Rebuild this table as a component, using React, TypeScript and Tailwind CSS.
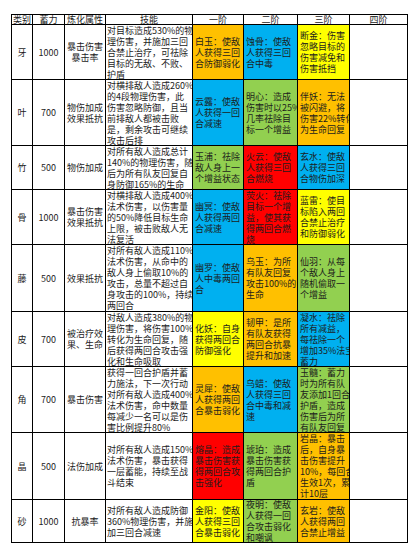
import React from "react";

type Tier = { c: "o" | "b" | "y" | "g" | "r"; lines: string[] };

interface Row {
  cat: string;
  power: string;
  attr: string[];
  skill: string[];
  tiers: [Tier, Tier, Tier];
}

const BG: Record<Tier["c"], string> = {
  o: "bg-[#ffc000]",
  b: "bg-[#00b0f0]",
  y: "bg-[#ffff00]",
  g: "bg-[#92d050]",
  r: "bg-[#ff0000]",
};

const rows: Row[] = [
  {
    cat: "牙",
    power: "1000",
    attr: ["暴击伤害", "暴击率"],
    skill: ["对目标造成530%的物", "理伤害，并施加三回", "合禁止治疗，可祛除", "目标的无敌、不败、", "护盾"],
    tiers: [
      { c: "o", lines: ["白玉：使敌", "人获得三回", "合防御弱化"] },
      { c: "b", lines: ["蚀骨：使敌", "人获得三回", "合中毒"] },
      { c: "y", lines: ["断金：伤害", "忽略目标的", "伤害减免和", "伤害抵挡"] },
    ],
  },
  {
    cat: "叶",
    power: "700",
    attr: ["物伤加成", "效果抵抗"],
    skill: ["对横排敌人造成260%", "的4段物理伤害，此", "伤害忽略防御，且当", "前排敌人都被击败", "是，剩余攻击可继续", "攻击后排"],
    tiers: [
      { c: "b", lines: ["云露：使敌", "人获得一回", "合减速"] },
      { c: "g", lines: ["明心：造成", "伤害时以25%", "几率祛除目", "标一个增益"] },
      { c: "o", lines: ["伴妖：无法", "被闪避，将", "伤害22%转化", "为生命回复"] },
    ],
  },
  {
    cat: "竹",
    power: "500",
    attr: ["物伤加成"],
    skill: ["对所有敌人造成总计", "140%的物理伤害，随", "后为所有队友回复自", "身防御165%的生命"],
    tiers: [
      { c: "g", lines: ["玉浦：祛除", "敌人身上一", "个增益状态"] },
      { c: "r", lines: ["火云：使敌", "人获得三回", "合燃烧"] },
      { c: "b", lines: ["玄水：使敌", "人获得三回", "合物伤加深"] },
    ],
  },
  {
    cat: "骨",
    power: "1000",
    attr: ["暴击伤害", "效果抵抗"],
    skill: ["对横排敌人造成400%", "法术伤害，以伤害量", "的50%降低目标生命", "上限，被击败敌人无", "法复活"],
    tiers: [
      { c: "b", lines: ["幽冥：使敌", "人获得两回", "合减速"] },
      { c: "r", lines: ["荧火：祛除", "目标一个增", "益，使其获", "得两回合燃", "烧"] },
      { c: "y", lines: ["蓝雷：使目", "标陷入两回", "合禁止治疗", "和防御弱化"] },
    ],
  },
  {
    cat: "藤",
    power: "500",
    attr: ["效果抵抗"],
    skill: ["对所有敌人造成110%", "法术伤害，从命中的", "敌人身上偷取10%的", "攻击，总量不超过自", "身攻击的100%，持续", "两回合"],
    tiers: [
      { c: "b", lines: ["幽罗：使敌", "人中毒两回", "合"] },
      { c: "o", lines: ["乌玉：为所", "有队友回复", "攻击100%的", "生命"] },
      { c: "g", lines: ["仙羽：从每", "个敌人身上", "随机偷取一", "个增益"] },
    ],
  },
  {
    cat: "皮",
    power: "700",
    attr: ["被治疗效", "果、生命"],
    skill: ["对敌人造成380%的物", "理伤害，将伤害100%", "转化为生命回复，随", "后获得两回合攻击强", "化和生命吸取"],
    tiers: [
      { c: "y", lines: ["化妖：自身", "获得两回合", "防御强化"] },
      { c: "o", lines: ["韧甲：是所", "有队友获得", "两回合抗暴", "提升和加速"] },
      { c: "b", lines: ["凝水：祛除", "所有减益，", "每祛除一个", "增加35%法宝", "蓄力"] },
    ],
  },
  {
    cat: "角",
    power: "700",
    attr: ["暴击伤害"],
    skill: ["获得一回合护盾并蓄", "力施法，下一次行动", "对所有敌人造成400%", "法术伤害，命中数量", "每减少一名可以是伤", "害比例提升80%"],
    tiers: [
      { c: "o", lines: ["灵犀：使敌", "人获得两回", "合暴击弱化"] },
      { c: "b", lines: ["乌蜡：使敌", "人获得三回", "合中毒和减", "速"] },
      { c: "g", lines: ["玉髓：蓄力", "时为所有队", "友添加1回合", "护盾，造成", "伤害后为所", "有队友回复"] },
    ],
  },
  {
    cat: "晶",
    power: "500",
    attr: ["法伤加成"],
    skill: ["对所有敌人造成150%", "法术伤害，暴击获得", "一层蓄能，持续至战", "斗结束"],
    tiers: [
      { c: "r", lines: ["熔晶：造成", "暴击伤害获", "得两回合攻", "击强化"] },
      { c: "g", lines: ["琥珀：造成", "暴击伤害获", "得两回合护", "盾"] },
      { c: "o", lines: ["岩晶：暴击", "后，自身暴", "击伤害提升", "10%，每回合", "生效1次，累", "计10层"] },
    ],
  },
  {
    cat: "砂",
    power: "1000",
    attr: ["抗暴率"],
    skill: ["对所有敌人造成防御", "360%物理伤害，并施", "加三回合减速"],
    tiers: [
      { c: "y", lines: ["金阳：使敌", "人获得三回", "合暴击弱化"] },
      { c: "g", lines: ["夜明：使敌", "人获得一回", "合攻击弱化", "和嘲讽"] },
      { c: "o", lines: ["玄岩：使敌", "人获得两回", "合禁止增益"] },
    ],
  },
];

const headers = ["类别", "蓄力", "炼化属性", "技能", "一阶", "二阶", "三阶", "四阶"];

function Lines({ lines }: { lines: string[] }) {
  return (
    <>
      {lines.map((l, i) => (
        <span key={i} className="block whitespace-nowrap">
          {l}
        </span>
      ))}
    </>
  );
}

export default function App() {
  return (
    <div
      className="min-h-screen bg-white pl-[11px] pt-[14px] text-[9px] leading-[11px] text-[#1c1c1c]"
      style={{ fontFamily: '"Noto Sans CJK SC", "Liberation Sans", sans-serif' }}
    >
      <div className="grid w-fit grid-cols-[20px_31px_40px_86px_50px_53px_51px_57px] grid-rows-[9px_54px_65px_43px_54px_66px_54px_65px_66px_42px] gap-px border border-black bg-black">
        {headers.map((h) => (
          <div key={h} className="flex items-center justify-center overflow-hidden bg-white leading-[9px]">
            {h}
          </div>
        ))}
        {rows.map((r) => (
          <React.Fragment key={r.cat}>
            <div className="flex items-center justify-center bg-white">{r.cat}</div>
            <div className="flex items-center justify-center bg-white">{r.power}</div>
            <div className="flex flex-col items-center justify-center overflow-hidden bg-white text-center">
              <Lines lines={r.attr} />
            </div>
            <div className="flex flex-col justify-center overflow-hidden bg-white pl-[1px]">
              <Lines lines={r.skill} />
            </div>
            {r.tiers.map((t, i) => (
              <div key={i} className={`flex flex-col justify-center overflow-hidden pl-[2px] ${BG[t.c]}`}>
                <Lines lines={t.lines} />
              </div>
            ))}
            <div className="bg-white" />
          </React.Fragment>
        ))}
      </div>
    </div>
  );
}
